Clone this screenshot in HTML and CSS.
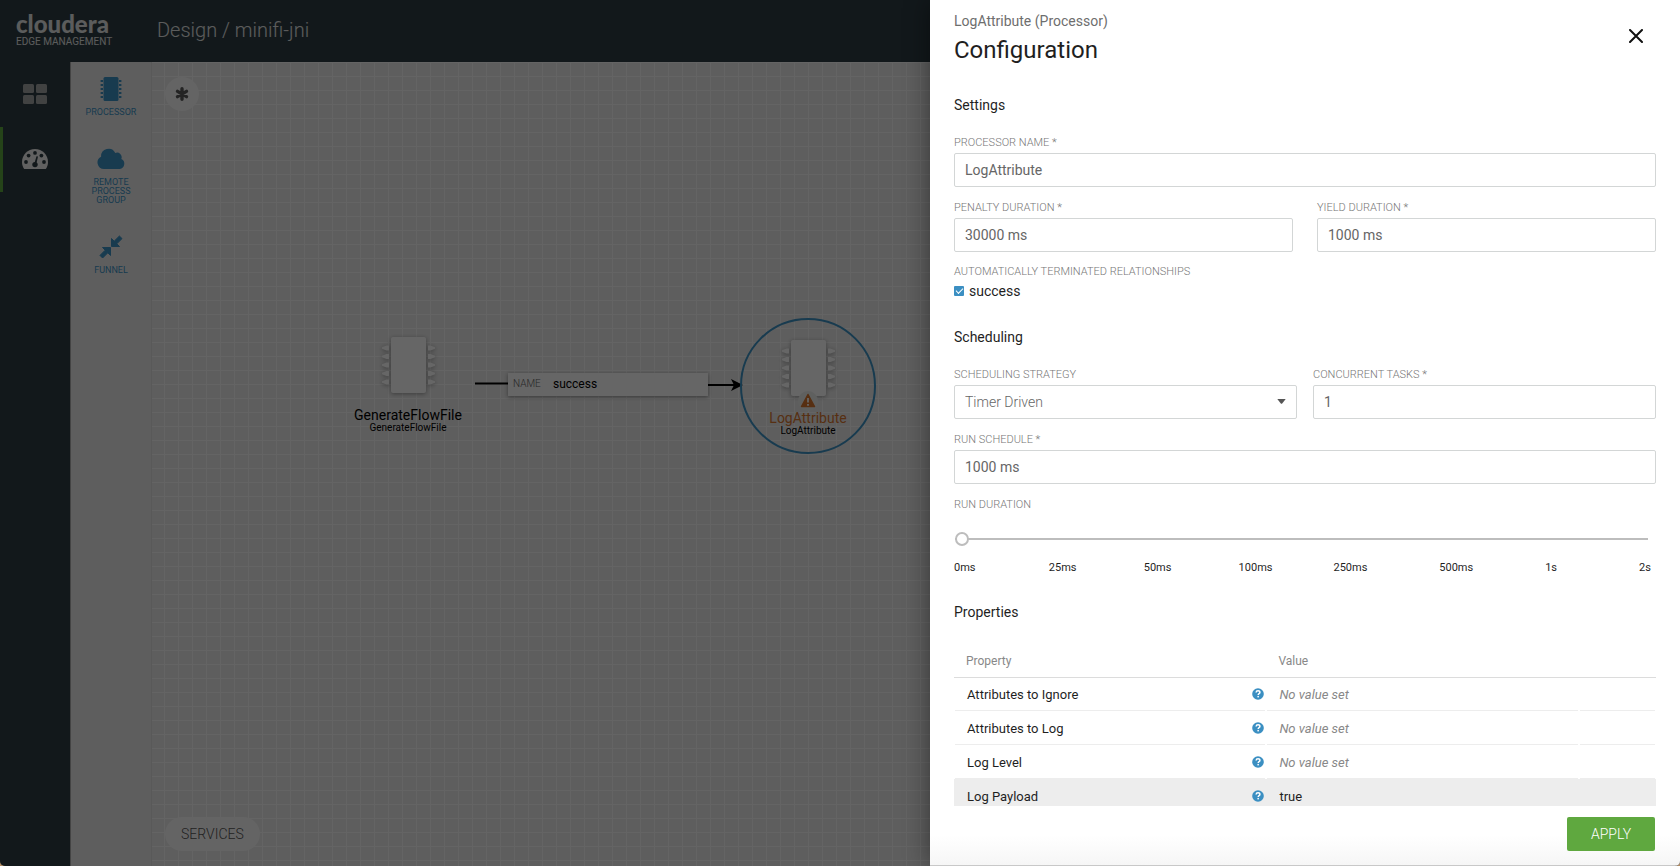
FILE: index.html
```html
<!DOCTYPE html>
<html lang="en">
<head>
<meta charset="utf-8">
<title>Cloudera Edge Management</title>
<link rel="stylesheet" href="styles.css">
</head>
<body>
<svg class="defs" aria-hidden="true">
  <symbol id="chip" viewBox="0 0 53 56">
    <rect x="9" y="0" width="35" height="56" rx="2"/>
    <path d="M7 8.500v5H4.500L0 11.800v-1.600l4.500-1.700zM7 17v5H4.500L0 20.300v-1.600L4.500 17zM7 25.500v5H4.500L0 28.800v-1.600l4.500-1.700zM7 34v5H4.500L0 37.300v-1.600L4.500 34zM7 42.500v5H4.500L0 45.800v-1.600l4.500-1.700z"/>
    <path d="M46 8.500v5h2.500l4.500-1.700v-1.600l-4.500-1.700zM46 17v5h2.500l4.500-1.700v-1.600L48.500 17zM46 25.500v5h2.500l4.500-1.700v-1.600l-4.500-1.700zM46 34v5h2.500l4.500-1.700v-1.600L48.500 34zM46 42.500v5h2.500l4.500-1.700v-1.600l-4.500-1.700z"/>
  </symbol>
  <symbol id="help" viewBox="0 0 12 12">
    <circle cx="6" cy="6" r="5.800" fill="#3b8fc2"/>
    <path d="M4.100 4.500C4.200 3.300 5 2.800 6 2.800s1.900.6 1.900 1.600c0 1.300-1.700 1.200-1.700 2.500" fill="none" stroke="#fff" stroke-width="1.500"/>
    <rect x="5.400" y="7.900" width="1.500" height="1.500" fill="#fff"/>
  </symbol>
</svg>
<div class="app">
  <header class="topbar">
    <div class="logo"><span class="logo-name">cloudera</span><span class="logo-sub">EDGE MANAGEMENT</span></div>
    <div class="crumbs">Design / minifi-jni</div>
  </header>
  <div class="workspace">
    <nav class="nav">
      <button class="nav-item" aria-label="Dashboard">
        <svg width="24" height="20" viewBox="0 0 24 20" fill="#a4a5a6"><rect width="11" height="9" rx="1.500"/><rect x="13" width="11" height="9" rx="1.500"/><rect y="11" width="11" height="9" rx="1.500"/><rect x="13" y="11" width="11" height="9" rx="1.500"/></svg>
      </button>
      <button class="nav-item active" aria-label="Design">
        <svg width="26" height="20" viewBox="0 0 26 20"><path d="M2.200 20C.8 18 0 15.600 0 13 0 5.800 5.800 0 13 0s13 5.800 13 13c0 2.600-.8 5-2.200 7z" fill="#f2f2f2"/><g fill="#2f3e44"><circle cx="4" cy="13" r="1.900"/><circle cx="6.600" cy="6.600" r="1.900"/><circle cx="13" cy="3.900" r="1.900"/><circle cx="19.400" cy="6.600" r="1.900"/><circle cx="22" cy="13" r="1.900"/><circle cx="13" cy="15.600" r="2.700"/><path d="M14.500 7.300l1.500.3-1.800 8-2-.5z"/></g></svg>
      </button>
    </nav>
    <aside class="palette">
      <button class="tool">
        <svg width="24" height="24" viewBox="0 0 24 24"><rect x="4.500" width="15" height="24" rx="1.500"/><path d="M2.800 3v18M21.200 3v18" stroke="#3c93c6" stroke-width="2.400" stroke-dasharray="2 2"/></svg>
        PROCESSOR</button>
      <button class="tool">
        <svg width="28" height="24" viewBox="0 0 28 24"><path d="M7 22a6.500 6.500 0 0 1-2.900-12.300A7.500 7.500 0 0 1 18.300 6a4.600 4.600 0 0 1 6 6A5.300 5.300 0 0 1 22.800 22z"/></svg>
        REMOTE<br>PROCESS<br>GROUP</button>
      <button class="tool">
        <svg width="24" height="24" viewBox="0 0 24 24"><path d="M12.500 11.500V3.500l2.700 2.700 5.200-5.200 2.600 2.600-5.200 5.200 2.700 2.700zM11.500 12.500v8l-2.700-2.700L3.600 23 1 20.400l5.200-5.200-2.700-2.700z" stroke="#3c93c6" stroke-linejoin="round"/></svg>
        FUNNEL</button>
    </aside>
    <main class="canvas">
      <button class="fab" aria-label="Actions">
        <svg width="14" height="14" viewBox="0 0 14 14"><path d="M7 1.800v10.400M2.500 4.400l9 5.200M11.500 4.400l-9 5.200" stroke="#5a5a5a" stroke-width="3.400" stroke-linecap="round"/></svg>
      </button>
      <svg class="wires" width="600" height="340" viewBox="0 0 600 340"><path d="M323 321.500h34" stroke="#000" stroke-width="2"/><path d="M556 323h28" stroke="#000" stroke-width="2"/><path d="M579 317l12 6-12 6 3-6z"/></svg>
      <div class="wire-label"><span class="wire-key">NAME</span><span>success</span></div>
      <div class="node node-source">
        <svg class="node-chip" width="53" height="56"><use href="#chip"/></svg>
        <div class="node-name">GenerateFlowFile</div>
        <div class="node-type">GenerateFlowFile</div>
      </div>
      <div class="node node-target">
        <svg class="node-chip" width="53" height="56"><use href="#chip"/></svg>
        <svg class="warn" width="20" height="20" viewBox="0 0 20 20"><circle cx="10" cy="10" r="10" fill="#eef0ee"/><path d="M10 3.500l6.500 12h-13z" fill="#d9772f" stroke="#d9772f" stroke-width="1.500" stroke-linejoin="round"/><path d="M10 7v4.500M10 13v1.800" stroke="#fff" stroke-width="1.800"/></svg>
        <div class="node-name warning">LogAttribute</div>
        <div class="node-type">LogAttribute</div>
      </div>
      <button class="services">SERVICES</button>
    </main>
  </div>
  <div class="backdrop"></div>

  <section class="drawer" role="dialog" aria-labelledby="drawer-title">
    <header class="drawer-head">
      <div>
        <div class="drawer-sub">LogAttribute (Processor)</div>
        <h1 id="drawer-title">Configuration</h1>
      </div>
      <button class="close" aria-label="Close"><svg width="14" height="14" viewBox="0 0 14 14"><path d="M1 1l12 12M13 1L1 13" stroke="#111" stroke-width="2" stroke-linecap="round"/></svg></button>
    </header>
    <form class="drawer-body">
      <section class="group">
        <h2>Settings</h2>
        <div class="field"><label for="name">PROCESSOR NAME *</label><input id="name" type="text" value="LogAttribute"></div>
        <div class="pair wide">
          <div class="field"><label for="penalty">PENALTY DURATION *</label><input id="penalty" type="text" value="30000 ms"></div>
          <div class="field"><label for="yield">YIELD DURATION *</label><input id="yield" type="text" value="1000 ms"></div>
        </div>
        <fieldset>
          <legend>AUTOMATICALLY TERMINATED RELATIONSHIPS</legend>
          <label class="check"><input type="checkbox" checked>success</label>
        </fieldset>
      </section>
      <section class="group">
        <h2>Scheduling</h2>
        <div class="pair">
          <div class="field"><label for="strategy">SCHEDULING STRATEGY</label>
            <div class="select"><select id="strategy"><option>Timer Driven</option></select><svg width="9" height="5" viewBox="0 0 9 5"><path d="M.3 0h8.400L5.200 4.400q-.7.700-1.400 0z" fill="#555"/></svg></div>
          </div>
          <div class="field"><label for="tasks">CONCURRENT TASKS *</label><input id="tasks" type="text" value="1"></div>
        </div>
        <div class="field"><label for="schedule">RUN SCHEDULE *</label><input id="schedule" type="text" value="1000 ms"></div>
        <div class="field slider"><label for="duration">RUN DURATION</label>
          <input id="duration" type="range" min="0" max="7" value="0">
          <div class="ticks"><span>0ms</span><span>25ms</span><span>50ms</span><span>100ms</span><span>250ms</span><span>500ms</span><span>1s</span><span>2s</span></div>
        </div>
      </section>
      <section class="group">
        <h2>Properties</h2>
        <table>
          <colgroup><col class="col-main"><col class="col-main"><col></colgroup>
          <thead><tr><th>Property</th><th>Value</th><th></th></tr></thead>
          <tbody>
            <tr><td><div class="prop">Attributes to Ignore<svg width="12" height="12"><use href="#help"/></svg></div></td><td class="unset">No value set</td><td></td></tr>
            <tr><td><div class="prop">Attributes to Log<svg width="12" height="12"><use href="#help"/></svg></div></td><td class="unset">No value set</td><td></td></tr>
            <tr><td><div class="prop">Log Level<svg width="12" height="12"><use href="#help"/></svg></div></td><td class="unset">No value set</td><td></td></tr>
            <tr class="selected"><td><div class="prop">Log Payload<svg width="12" height="12"><use href="#help"/></svg></div></td><td>true</td><td></td></tr>
          </tbody>
        </table>
      </section>
    </form>
    <footer class="drawer-foot"><button class="apply">APPLY</button></footer>
  </section>
</div>
</body>
</html>
```

FILE: styles.css
```css
* { box-sizing: border-box; }
body { margin: 0; background: #b08a62; font-family: Roboto, "Liberation Sans", sans-serif; font-size: 14px; color: #1f1f1f; }
button { font: inherit; border: 0; background: none; padding: 0; cursor: pointer; }
h1, h2 { margin: 0; font-weight: 400; }
svg { display: block; flex: none; }
.defs { display: none; }

.app { position: relative; height: 100vh; overflow: hidden; display: flex; flex-direction: column; background: #2f3e44; border-radius: 0 0 5px 5px; }
.topbar { display: flex; align-items: center; height: 62px; flex: none; color: #e4e6e6; }
.logo { width: 157px; padding: 0 0 3px 16px; display: flex; flex-direction: column; }
.logo-name { font: 900 24px/24px Lato, sans-serif; }
.logo-sub { font-size: 10px; line-height: 12px; }
.crumbs { font-size: 20px; font-weight: 300; line-height: 24px; padding-bottom: 2px; }
.workspace { flex: 1; min-height: 0; display: flex; }

.nav { width: 70px; flex: none; }
.nav-item { width: 100%; height: 65px; padding-bottom: 2px; display: flex; align-items: center; justify-content: center; }
.nav-item.active { box-shadow: inset 3px 0 #5ea93f; }
.palette { width: 82px; flex: none; background: #ececec; border-left: 1px solid #aaa; border-right: 1px solid #dedede; padding-top: 15px; display: flex; flex-direction: column; align-items: center; gap: 30px; }
.tool { font-size: 9px; line-height: 9px; color: #3c93c6; fill: #3c93c6; text-align: center; }
.tool svg { margin: 0 auto 7px; }

.canvas { position: relative; flex: 1; overflow: hidden; background: linear-gradient(90deg, #f9f9f9 1px, transparent 1px) 12px 0 / 14px 14px, linear-gradient(#f9f9f9 1px, transparent 1px) 0 0 / 14px 14px, #ebebeb; }
.fab { position: absolute; left: 13px; top: 15px; width: 34px; height: 34px; border-radius: 50%; background: #fafafa; display: flex; align-items: center; justify-content: center; }
.services { position: absolute; left: 13px; bottom: 15px; height: 34px; padding: 0 16px; border-radius: 17px; background: #fafafa; font-weight: 300; color: #555; }
.wires { position: absolute; left: 0; top: 0; }
.wire-label { position: absolute; left: 356px; top: 311px; width: 200px; height: 23px; padding: 0 5px 2px; background: #fff; box-shadow: 0 1px 4px rgba(0, 0, 0, .4); display: flex; align-items: center; gap: 13px; font-size: 12px; color: #000; }
.wire-key { width: 27px; font-size: 10px; font-weight: 300; color: #666; }
.node { position: absolute; width: 136px; height: 136px; border-radius: 50%; display: flex; flex-direction: column; align-items: center; color: #000; }
.node-source { left: 188px; top: 253px; padding-top: 22px; }
.node-target { left: 588px; top: 256px; padding-top: 20px; border: 2px solid #3c93c6; }
.node-chip { fill: #fff; filter: drop-shadow(0 1px 2px rgba(0, 0, 0, .35)); }
.node-name { margin-top: 14px; line-height: 16px; }
.node-name.warning { color: #d9772f; }
.node-type { font-size: 10px; line-height: 10px; }
.warn { position: absolute; left: 56px; top: 71px; }
.backdrop { position: absolute; inset: 0; background: rgba(0, 0, 0, .6); }

.drawer { position: absolute; top: 0; right: 0; bottom: 0; width: 750px; max-width: 100%; display: flex; flex-direction: column; background: linear-gradient(#fff calc(100% - 30px), #f6f6f6); border-bottom: 1px solid #c8c8c8; box-shadow: 0 0 24px rgba(0, 0, 0, .45); }
.drawer-head { display: flex; justify-content: space-between; align-items: flex-start; padding: 11px 24px 0; flex: none; }
.drawer-sub { line-height: 20px; color: #6e6e6e; }
.drawer-head h1 { font-size: 24px; line-height: 32px; margin-top: 3px; }
.close { width: 40px; height: 40px; margin-top: 5px; display: flex; align-items: center; justify-content: center; }
.drawer-body { flex: 1; min-height: 0; overflow: hidden; padding: 29px 24px 0; }
.group { margin-bottom: 26px; }
.group h2 { font-size: 14px; line-height: 20px; margin-bottom: 20px; }
.field { display: flex; flex-direction: column; gap: 2px; margin-bottom: 13px; min-width: 0; }
.field > label, legend { font-size: 11px; line-height: 16px; font-weight: 300; color: #777; padding: 0; }
.field input[type=text], select { width: 100%; height: 34px; padding: 0 10px; border: 1px solid #d3d6d6; border-radius: 2px; background: #fff; font: inherit; color: #666; outline: 0; }
.pair { display: grid; grid-template-columns: 1fr 1fr; gap: 16px; }
.pair.wide { gap: 24px; }
.pair.wide .field { margin-bottom: 12px; }
fieldset { border: 0; padding: 0; margin: 0; }
.check { display: flex; align-items: center; gap: 5px; line-height: 20px; margin-top: 1px; }
.check input { appearance: none; width: 10px; height: 10px; margin: 0; border-radius: 1px; background: #3b8fc2; display: grid; place-items: center; }
.check input::before { content: ""; width: 6px; height: 3px; border: solid #fff; border-width: 0 0 1px 1px; transform: rotate(-45deg); margin-bottom: 2px; }
.select { position: relative; }
select { appearance: none; font-weight: 300; }
.select svg { position: absolute; right: 11px; top: 14px; pointer-events: none; }
input[type=range] { appearance: none; width: calc(100% - 9px); height: 20px; margin: 14px 0 9px 1px; background: none; }
input[type=range]::-webkit-slider-runnable-track { height: 2px; background: #bdbdbd; }
input[type=range]::-webkit-slider-thumb { appearance: none; width: 14px; height: 14px; margin-top: -6px; border: 2px solid #bdbdbd; border-radius: 50%; background: #fff; }
.ticks { display: grid; grid-template-columns: 95fr 95fr 95fr 95fr 106fr 106fr 94fr 17fr; font-size: 11px; line-height: 16px; }

table { width: 100%; table-layout: fixed; border-collapse: collapse; font-size: 13px; }
.group table { margin-top: 19px; }
.col-main { width: 44.5%; }
th { height: 35px; padding: 3px 12px 0; border-bottom: 1px solid #dcdcdc; text-align: left; font-size: 12px; font-weight: 400; color: #888; }
td { height: 34px; padding: 0 2px 0 13px; background: linear-gradient(#ededed, #ededed) center bottom / calc(100% - 2px) 1px no-repeat; }
.prop { display: flex; align-items: center; justify-content: space-between; }
.unset { color: #888; font-style: italic; }
.selected td { background: #ededed; }
.drawer-foot { display: flex; justify-content: flex-end; flex: none; padding: 11px 25px 14px 24px; }
.apply { width: 88px; height: 34px; border-radius: 2px; background: #5fa83f; color: #fff; font-weight: 300; }
```
